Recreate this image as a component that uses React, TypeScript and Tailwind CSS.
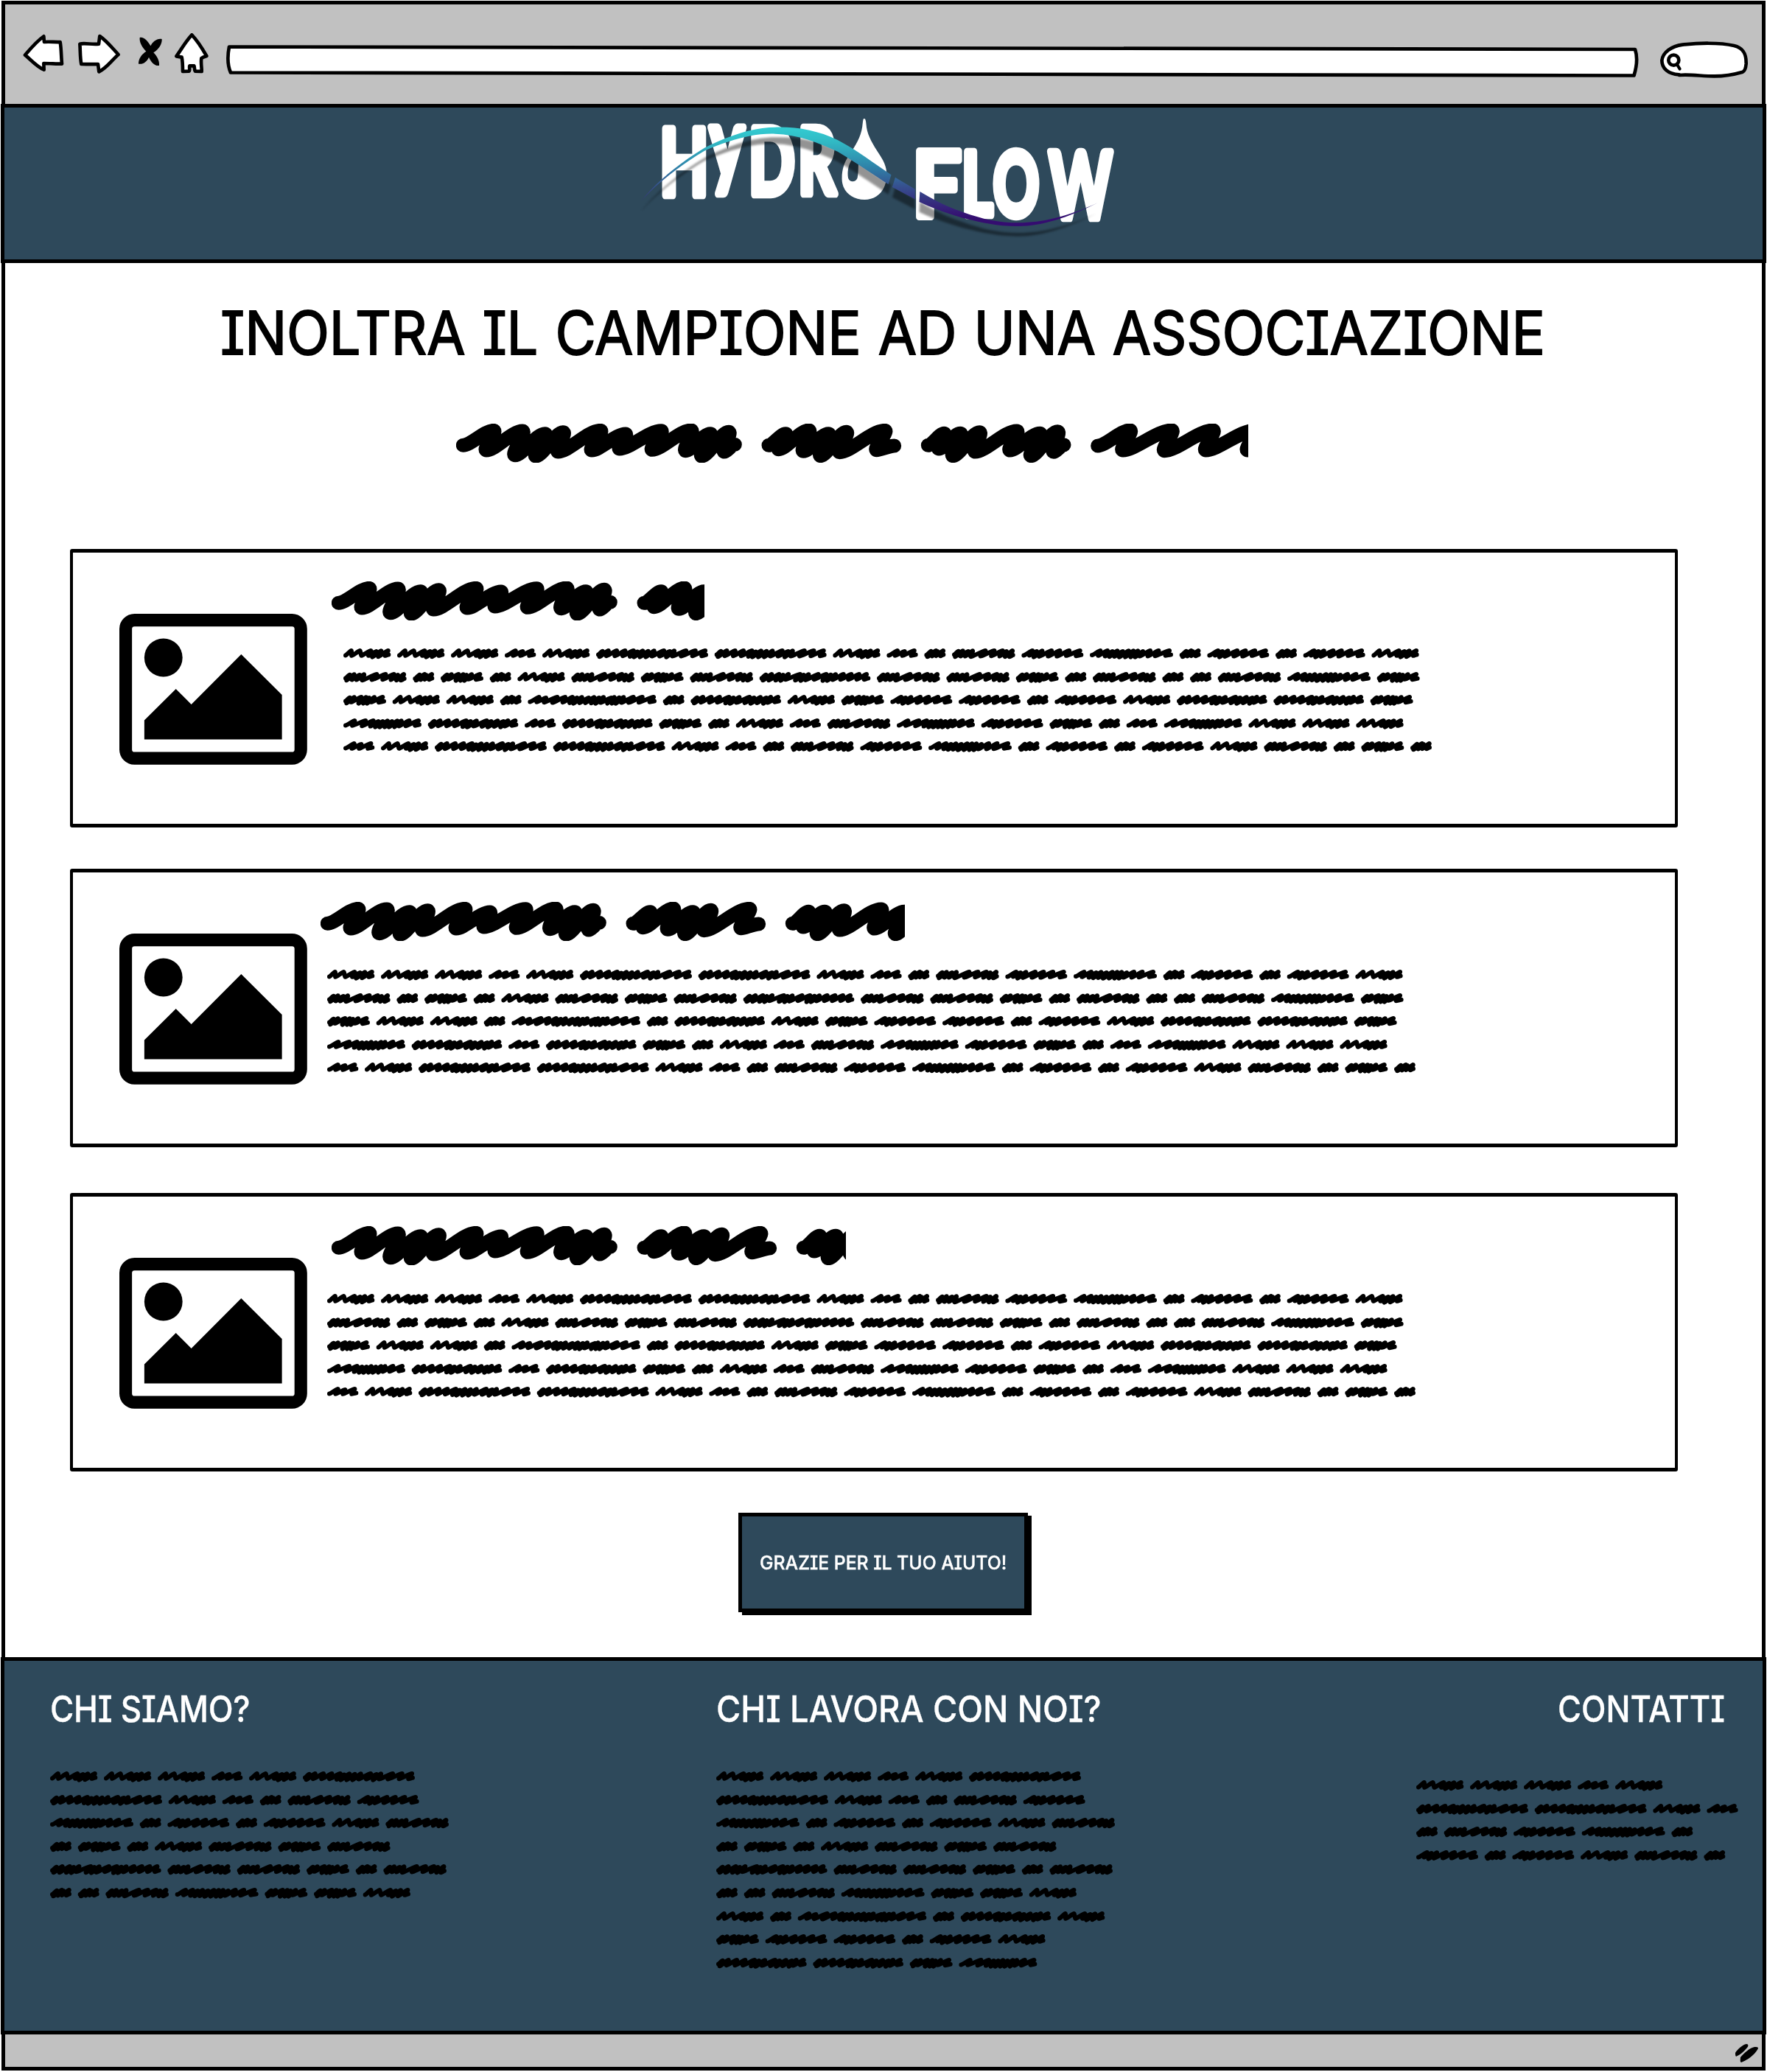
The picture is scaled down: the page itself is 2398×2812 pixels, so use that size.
import React from "react";

type Pt = [number, number];

/* Pen strokes of every scribbled word: alternating low / high points, in thirds of a pixel. */
const SMALL: Record<string, { w: number; p: string }> = {
  A: { w: 193, p: "9,27 32,9 38,28 68,9 77,28 112,9 106,28 134,12 122,33 154,10 146,32 182,9 174,28 184,24" },
  B: { w: 127, p: "9,27 44,9 38,28 73,12 68,28 112,9 104,28 118,24" },
  C: { w: 456, p: "9,24 26,11 14,32 50,9 45,29 84,9 80,29 118,9 112,29 152,9 142,31 168,13 158,33 190,10 182,33 212,11 206,33 236,10 230,30 276,9 262,30 300,12 290,33 318,10 314,30 366,9 350,30 404,9 396,29 444,9 434,29 447,25" },
  D: { w: 87, p: "9,26 27,11 13,32 48,9 36,30 54,12 52,29 77,9 70,29 78,24" },
  E: { w: 174, p: "9,24 26,11 13,32 44,10 36,28 73,9 66,33 92,10 85,33 105,12 100,33 126,10 118,28 160,9 148,29 165,25" },
  F: { w: 257, p: "9,24 26,11 13,32 44,10 38,30 66,12 58,30 84,10 80,32 136,9 120,30 172,9 164,29 206,9 198,30 222,12 220,32 246,9 238,32 248,26" },
  G: { w: 252, p: "9,27 44,9 36,27 62,12 54,33 84,10 76,31 122,9 112,30 156,9 148,30 194,9 186,28 238,9 226,29 243,25" },
  H: { w: 339, p: "9,26 43,9 38,28 72,9 66,30 92,12 84,32 112,10 104,31 134,12 124,33 158,10 148,33 178,10 170,33 196,10 188,33 216,12 208,30 246,9 240,30 280,9 270,29 324,9 312,28 330,24" },
  I: { w: 524, p: "9,27 46,9 40,28 74,12 70,29 120,9 104,30 152,9 146,29 182,9 174,31 200,12 190,33 220,10 214,31 248,12 238,31 270,10 262,32 290,12 280,33 308,10 300,30 340,12 328,33 352,10 346,33 372,11 362,33 390,10 384,30 430,9 414,30 466,9 456,29 512,9 500,28 515,24" },
  J: { w: 368, p: "9,24 26,11 14,32 50,9 45,29 84,9 80,29 118,9 112,29 156,9 146,32 174,12 164,33 198,10 190,30 240,9 224,31 258,12 248,33 284,10 274,31 308,12 300,33 326,9 318,30 356,9 346,28 359,24" },
  K: { w: 318, p: "9,27 46,9 40,28 90,9 80,29 122,9 114,30 142,12 134,33 160,12 152,33 180,10 172,33 198,12 190,33 220,10 212,33 236,10 230,30 268,9 258,29 306,9 296,28 309,24" },
  L: { w: 452, p: "9,24 26,11 14,32 50,9 42,32 80,9 70,32 96,12 90,33 118,9 110,29 166,9 150,32 180,12 172,33 200,10 192,31 240,9 226,29 272,9 262,33 290,11 280,33 310,10 302,30 342,9 334,29 374,9 366,29 406,9 400,29 436,9 430,29 443,24" },
};

const BIG: Record<string, { w: number; p: string }> = {
  P: { w: 1162, p: "28,88 153,28 123,108 270,30 240,128 362,41 325,132 436,35 415,114 588,28 552,108 690,42 665,102 835,29 798,106 957,27 935,110 1035,41 1000,132 1110,34 1092,114 1135,85" },
  Q: { w: 567, p: "28,88 98,41 69,104 192,27 170,112 272,41 240,131 345,34 317,116 502,28 468,107 540,90" },
  R: { w: 609, p: "28,88 94,40 72,102 160,40 130,131 238,35 220,114 390,30 362,108 484,40 448,131 556,32 540,115 582,86" },
  S: { w: 716, p: "28,90 160,27 130,108 330,27 300,110 498,27 468,108 668,27 638,108 690,88" },
};

const parse = (s: string): Pt[] => s.split(" ").map((v) => v.split(",").map(Number) as Pt);

/* Rising strokes bend into each crest; falling strokes hook back under it. */
function strokePath(p: Pt[], dx: number, bend: number, hook: number) {
  let d = `M${p[0][0] + dx},${p[0][1]}`;
  for (let i = 1; i < p.length; i++) {
    const [ax, ay] = p[i - 1];
    const [bx, by] = p[i];
    const w = bx - ax;
    const h = Math.abs(by - ay);
    if (i % 2) {
      d += `C${ax + dx + w * bend * 0.85},${ay} ${bx + dx - w * bend},${by} ${bx + dx},${by}`;
    } else {
      d += `C${ax + dx + h * hook},${ay} ${bx + dx - h * hook},${by} ${bx + dx},${by}`;
    }
  }
  return d;
}

function Line({ words }: { words: string }) {
  let x = 0;
  const d = words.split("").map((c) => {
    const pts = parse(SMALL[c].p);
    const leaned = pts.map(([px, py], i): Pt => {
      const inner = i > 1 && i < pts.length - 1 && i % 2 === 0;
      return [inner && px > 16 ? px - 4 : px, 9 + (py - 9) * 1.08];
    });
    const s = strokePath(leaned, x, 0.16, 0.12);
    x += SMALL[c].w + 26;
    return s;
  });
  return (
    <svg className="block h-[14px] overflow-visible" style={{ width: x / 3 }} viewBox={`0 0 ${x} 42`} fill="none" stroke="#000" strokeWidth={18} strokeLinecap="round" strokeLinejoin="round">
      <path d={d.join("")} />
    </svg>
  );
}

function Paragraph({ lines }: { lines: string[] }) {
  return (
    <div className="flex flex-col gap-[17.6px]">
      {lines.map((l, i) => (
        <Line key={i} words={l} />
      ))}
    </div>
  );
}

function BigScribble({ words, width }: { words: string; width: number }) {
  let x = 0;
  const d = words.split("").map((c) => {
    const s = strokePath(parse(BIG[c].p), x, 0.3, 0.22);
    x += BIG[c].w + 82;
    return s;
  });
  return (
    <svg className="block h-[53px] overflow-hidden" style={{ width }} viewBox={`0 0 ${width * 3} 159`} fill="none" stroke="#000" strokeWidth={57} strokeLinecap="round" strokeLinejoin="round">
      <path d={d.join("")} />
    </svg>
  );
}

function Picture() {
  return (
    <svg className="block h-[205px] w-[255px] shrink-0" viewBox="0 0 256 205" preserveAspectRatio="none">
      <rect x="8.6" y="8.6" width="238.6" height="187.6" rx="12" fill="#fff" stroke="#000" strokeWidth="17.2" />
      <circle cx="60" cy="59.5" r="26" />
      <path d="M34 170.500V144.500L77 102 98 123 166 55 221.500 110V170.500Z" />
    </svg>
  );
}

const BODY = ["AAABACCABDFGHDGDGA", "FDEDAFEFLFFEDFDDFHE", "EAADIDJAEGGDGAJJE", "KJBJEDABFKGEDBKAAA", "BACCABDFGHDGDGAFDED"];
const ABOUT = ["AAABAC", "CABDFG", "HDGDGAF", "DEDAFEF", "LFFEDF", "DDFHEEA"];
const PARTNERS = [...ABOUT, "ADIDJA", "EGGDGA", "JJEK"];
const CONTACTS = ["AAABA", "CCAB", "DFGHD", "GDGAFD"];

function Card({ words, width, className, textClass }: { words: string; width: number; className: string; textClass: string }) {
  return (
    <article className="flex h-[378px] w-[2182px] rounded-[3px] border-[5px] border-l-4 border-r-4 border-black pl-[63px] pt-[83px]">
      <Picture />
      <div className={className}>
        <BigScribble words={words} width={width} />
        <div className={textClass}>
          <Paragraph lines={BODY} />
        </div>
      </div>
    </article>
  );
}

/* Logo letters: box edges, then the glyph's own bearing, width, rise and drop in em. */
const LOGO_LETTERS: [string, number, number, number, number, number, number, number, number][] = [
  ["H", 38.4, 96.4, 40, 139, 0.09, 0.57, 0.72, 0],
  ["y", 100, 155.5, 39, 138, 0.01, 0.53, 0.51, 0.17],
  ["D", 159, 222, 40, 138, 0.09, 0.66, 0.72, 0],
  ["R", 226, 281, 38, 137, 0.09, 0.58, 0.72, 0],
  ["F", 384, 446, 71, 169, 0.09, 0.45, 0.72, 0],
  ["L", 448, 490, 72, 166, 0.09, 0.41, 0.72, 0],
  ["O", 487, 552, 71, 169, 0.045, 0.73, 0.73, 0.01],
  ["W", 560, 655, 71, 170, 0.01, 1.06, 0.72, 0],
];

function Logo() {
  const top =
    "M22 430C60 365 120 290 215 212C300 155 370 128 430 128C500 126 560 142 620 180C680 222 730 275 783 322L774 360C730 322 680 275 620 227C560 190 500 158 430 155C370 152 300 174 215 224C130 292 62 368 22 430Z";
  const mid = "M795 332 855 380V421L786 372Z";
  const low =
    "M870 390C910 422 950 452 1000 473C1060 502 1110 517 1170 517C1240 517 1320 492 1410 436C1320 497 1240 531 1170 531C1110 532 1060 517 1000 497C950 478 910 458 868 432Z";
  const size = 112;
  const pen = 9;
  return (
    <svg className="block h-[203px] w-[700px] overflow-visible" viewBox="0 17 700 203" role="img" aria-label="Hydro Flow">
      <defs>
        <linearGradient id="wave" gradientUnits="userSpaceOnUse" x1="0" y1="128" x2="0" y2="530">
          <stop offset="0" stopColor="#33ccd2" />
          <stop offset=".15" stopColor="#31b9c4" />
          <stop offset=".4" stopColor="#2f83a9" />
          <stop offset=".6" stopColor="#36508f" />
          <stop offset=".8" stopColor="#35247a" />
          <stop offset=".92" stopColor="#340d70" />
        </linearGradient>
        <filter id="soft" x="-5%" y="-5%" width="110%" height="120%">
          <feGaussianBlur stdDeviation="4" />
        </filter>
      </defs>
      {LOGO_LETTERS.map(([c, l, r, t, b, bearing, w, rise, drop]) => {
        const sx = (r - l - pen) / (w * size);
        const sy = (b - t - pen) / ((rise + drop) * size);
        const x = l + pen / 2 - bearing * size * sx;
        const y = b - pen / 2 - drop * size * sy;
        return (
          <text
            key={c}
            transform={`translate(${x} ${y}) scale(${sx} ${sy})`}
            fill="#fff"
            stroke="#fff"
            strokeWidth={pen}
            strokeLinejoin="round"
            vectorEffect="non-scaling-stroke"
            className="font-['Lato'] text-[112px] font-bold"
          >
            {c}
          </text>
        );
      })}
      <g transform="scale(.4464 .3333)">
        <path d="M700 93C705 92 706 100 708 130C712 165 728 200 745 235C760 265 770 290 769 325C768 385 740 423 702 423C660 423 632 385 633 335C633 300 640 270 656 240C675 200 690 170 695 125C697 105 697 94 700 93Z" fill="#fff" />
        <path d="M662 262C652 285 649 310 652 335C657 353 674 353 680 335C684 310 682 285 684 265Z" fill="#2e495b" />
        <g transform="translate(0 41)" opacity=".42" filter="url(#soft)">
          <path d={top + mid + low} />
        </g>
        <path d={top + mid + low} fill="url(#wave)" />
      </g>
    </svg>
  );
}

function Toolbar() {
  const ink = { fill: "#fff", stroke: "#000", strokeWidth: 14, strokeLinejoin: "round" as const, strokeLinecap: "round" as const };
  return (
    <div className="flex h-[135px] items-start bg-[#c1c1c1] pl-[24px] pr-[17px] pt-[39px]">
      <svg className="block h-[56px] w-[57px]" viewBox="93 138 171 168">
        <path {...ink} d="M102 227C125 200 150 170 178 151L180 174C200 172 225 175 245 174C250 205 249 235 252 263C228 263 202 261 178 261L179 287C150 275 130 250 102 227Z" />
      </svg>
      <svg className="ml-[17px] block h-[56px] w-[59px]" viewBox="315 138 177 168">
        <path {...ink} d="M325 182C345 176 375 186 402 182L406 150C435 170 458 200 482 225C455 248 435 280 403 295L399 264C375 265 352 264 331 264C326 240 327 205 325 182Z" />
      </svg>
      <svg className="ml-[23px] block h-[56px] w-[34px]" viewBox="561 138 102 168">
        <path d="M569 156C585 152 602 170 613 190C622 172 640 158 659 162C661 182 645 205 625 217C640 232 650 252 648 270C628 272 615 255 606 236C598 254 583 266 564 263C563 243 578 222 595 212C578 195 567 175 569 156Z" />
      </svg>
      <svg className="ml-[15px] block h-[56px] w-[48px]" viewBox="708 138 144 168">
        <path {...ink} d="M781 145C805 170 825 203 841 231C834 233 826 235 820 240C817 260 822 280 821 294L795 293C790 285 793 277 790 271H772C770 278 774 286 770 293L744 294C744 275 744 255 740 236L718 232C738 205 755 172 781 145Z" />
      </svg>
      <svg className="ml-[23px] mt-[14px] block h-[44px] min-w-0 flex-1 overflow-visible" viewBox="0 0 1920 44" preserveAspectRatio="none">
        <path d="M6 4.500 1914 8C1918 20 1916 32 1912.500 43.500L6 39.500C1 28 2 15 4 4.500Z" fill="#fff" stroke="#000" strokeWidth="4.700" strokeLinejoin="round" />
      </svg>
      <svg className="ml-[27px] mt-[9px] block h-[56px] w-[122px]" viewBox="456 164 366 168">
        <path {...ink} d="M536 306C490 303 466 280 466 248C470 215 505 190 550 184C610 177 700 174 760 188C800 197 810 225 809 262C807 285 800 293 795 295C750 308 710 312 680 312C630 312 580 304 536 308" />
        <circle cx="514" cy="247" r="21" fill="#fff" stroke="#000" strokeWidth="14" />
        <path d="M528 265 539 283" stroke="#000" strokeWidth="12" strokeLinecap="round" />
      </svg>
    </div>
  );
}

const label = "block origin-left whitespace-nowrap font-['Inter'] [font-feature-settings:'cv08'] leading-none";

export default function App() {
  return (
    <div className="h-[2812px] w-[2398px] bg-white px-[2px] pb-[2px] pt-px">
      <div className="flex h-[2809px] flex-col border-[5px] border-black bg-white">
        <Toolbar />
        <header className="-mx-[6px] flex h-[216px] justify-center border-[5px] border-black bg-[#2e495b]">
          <div className="mr-[-22px] mt-px">
            <Logo />
          </div>
        </header>

        <main className="flex h-[1892px] flex-col pl-[88px]">
          <h1 className={`${label} mt-[55px] ml-[204px] w-[1930px] scale-x-[0.936] text-[81px] font-normal tracking-[-0.3px] [word-spacing:2.4px] [-webkit-text-stroke:1.8px_#000]`}>
            INOLTRA IL CAMPIONE AD UNA ASSOCIAZIONE
          </h1>
          <div className="ml-[524px] mt-[82px]">
            <BigScribble words="PQRS" width={1075} />
          </div>
          <div className="mt-[117px] flex flex-col">
            <Card words="PQ" width={505.7} className="ml-[33px] -mt-[44px]" textClass="ml-[16px] mt-[38px]" />
            <div className="mt-[56px]">
              <Card words="PQR" width={793} className="ml-[18px] -mt-[43px]" textClass="ml-[9px] mt-[39px]" />
            </div>
            <div className="mt-[62px]">
              <Card words="PQR" width={698} className="ml-[33px] -mt-[43px]" textClass="-ml-[6px] mt-[39px]" />
            </div>
          </div>
          <button className="ml-[907px] mt-[56px] flex h-[135px] w-[393px] shrink-0 items-center border-[5px] border-black bg-[#2e495b] pl-[24px] text-white shadow-[5px_4px_0_#000]">
            <span className={`${label} scale-x-[0.953] text-[26px] font-medium [-webkit-text-stroke:0.4px_#fff]`}>GRAZIE PER IL TUO AIUTO!</span>
          </button>
        </main>

        <footer className="-mx-[6px] flex h-[512px] border-[5px] border-black bg-[#2e495b] text-white">
          <section className="w-[904px] pl-[62px] pt-[41px]">
            <h2 className={`${label} scale-x-[0.9] text-[49px] font-medium [-webkit-text-stroke:0.3px_#fff] tracking-[-0.3px]`}>CHI SIAMO?</h2>
            <div className="mt-[60px]">
              <Paragraph lines={ABOUT} />
            </div>
          </section>
          <section className="flex-1 pl-[62px] pt-[41px]">
            <h2 className={`${label} scale-x-[0.928] text-[49px] font-medium [-webkit-text-stroke:0.3px_#fff]`}>CHI LAVORA CON NOI?</h2>
            <div className="mt-[60px]">
              <Paragraph lines={PARTNERS} />
            </div>
          </section>
          <section className="w-[470px] pt-[41px]">
            <h2 className={`${label} ml-[192px] scale-x-[0.89] text-[49px] font-medium [-webkit-text-stroke:0.3px_#fff]`}>CONTATTI</h2>
            <div className="mt-[72px]">
              <Paragraph lines={CONTACTS} />
            </div>
          </section>
        </footer>

        <div className="flex flex-1 items-start justify-end bg-[#c1c1c1] pr-[5px] pt-[13px]">
          <svg className="block h-[25px] w-[31px]" viewBox="0 0 31 25">
            <path d="M0 12C3 7 10 1 15 0C18 0 18 3 16 5C12 10 6 15 1 17C0 16 0 14 0 12ZM7 18C12 12 20 5 26 4C29 4 31 4 31 6C27 14 18 21 8 25C6 24 7 20 7 18Z" />
          </svg>
        </div>
      </div>
    </div>
  );
}
